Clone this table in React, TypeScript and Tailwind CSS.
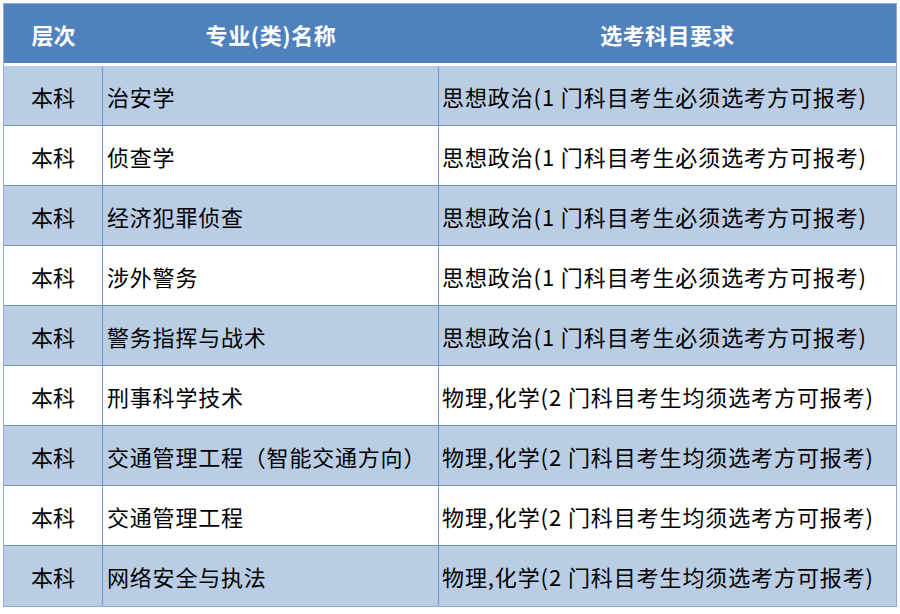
import React from "react";

const rows: [string, string][] = [
  ["治安学", "思想政治(1 门科目考生必须选考方可报考)"],
  ["侦查学", "思想政治(1 门科目考生必须选考方可报考)"],
  ["经济犯罪侦查", "思想政治(1 门科目考生必须选考方可报考)"],
  ["涉外警务", "思想政治(1 门科目考生必须选考方可报考)"],
  ["警务指挥与战术", "思想政治(1 门科目考生必须选考方可报考)"],
  ["刑事科学技术", "物理,化学(2 门科目考生均须选考方可报考)"],
  ["交通管理工程（智能交通方向）", "物理,化学(2 门科目考生均须选考方可报考)"],
  ["交通管理工程", "物理,化学(2 门科目考生均须选考方可报考)"],
  ["网络安全与执法", "物理,化学(2 门科目考生均须选考方可报考)"],
];

export default function App() {
  return (
    <div
      className="w-[900px] h-[614px] bg-white pl-[3px] pt-[3px] pr-[3px]"
      style={{ fontFamily: '"Noto Sans CJK SC", "Microsoft YaHei", sans-serif' }}
    >
      <div className="w-[894px] border border-[#8eaadb] bg-white">
        <div className="grid grid-cols-[99px_336px_1fr] h-[59px] bg-[#4f81bd] text-white font-bold text-[22px] items-center pt-[2px]">
          <div className="text-center">层次</div>
          <div className="text-center tracking-[0.6px]">专业(类)名称</div>
          <div className="text-center tracking-[0.4px]">选考科目要求</div>
        </div>
        <div className="h-[3px] bg-white" />
        {rows.map(([major, req], i) => (
          <div
            key={i}
            className={`grid grid-cols-[99px_336px_1fr] h-[60px] items-stretch text-[22px] text-black border-b border-[#6f95c9] ${
              i % 2 === 0 ? "bg-[#b9cde5]" : "bg-white"
            } ${i === rows.length - 1 ? "border-b-0" : ""}`}
          >
            <div className="flex items-center justify-center border-r border-[#6f95c9] pt-[1px]">本科</div>
            <div className="flex items-center pl-[4px] border-r border-[#6f95c9] whitespace-nowrap tracking-[0.8px] pt-[1px]">{major}</div>
            <div className="flex items-center pl-[3px] whitespace-nowrap tracking-[0.9px] pt-[1px]">{req}</div>
          </div>
        ))}
      </div>
    </div>
  );
}
